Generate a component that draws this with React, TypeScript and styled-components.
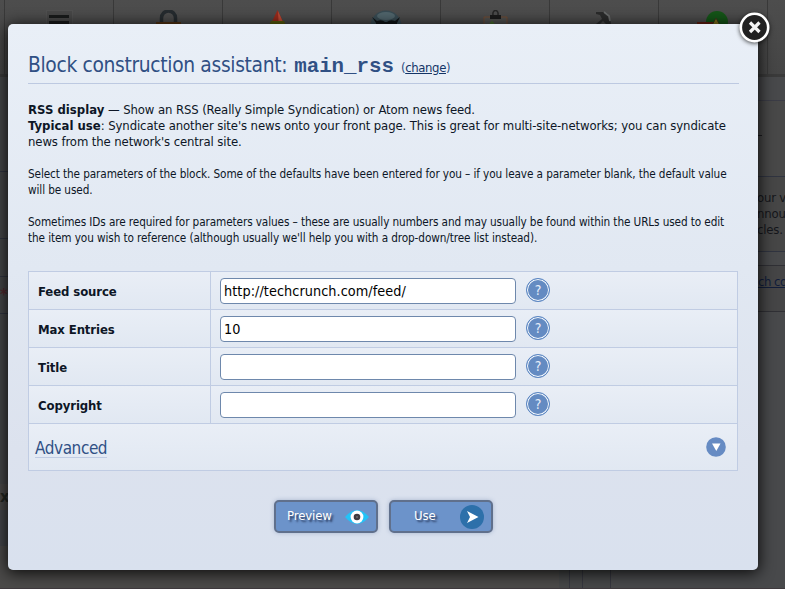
import React from 'react';
import styled, { createGlobalStyle } from 'styled-components';

const GlobalStyle = createGlobalStyle`
  *, *::before, *::after { box-sizing: border-box; }
  html, body { margin: 0; height: 589px; overflow: hidden; background: #484848; }
  body { font: 13px/16px "DejaVu Sans Condensed", "DejaVu Sans", sans-serif; color: #0d1626; }
  h1, h2, p { margin: 0; font-weight: normal; }
`;

/* ---------- dimmed page behind the dialog ---------- */

const Page = styled.div`
  position: relative;
  width: 785px;
  height: 589px;
  overflow: hidden;
  display: flex;
  flex-direction: column;
  background: #48494b;
  border-bottom: 1px solid #3e393d;
`;

const MenuBar = styled.nav`
  display: flex;
  flex: 0 0 77px;
  padding-left: 4px;
  background: linear-gradient(#4d4d4d, #454545);
  border-bottom: 3px solid #3a3a3a;
`;

const MenuCell = styled.div`
  flex: 0 0 109px;
  display: flex;
  justify-content: center;
  padding-top: 10px;
  border-left: 1px solid #393939;
`;

const PageColumns = styled.div`
  flex: 1;
  display: flex;
`;

const LeftColumn = styled.div`
  flex: 0 0 559px;
  display: flex;
  flex-direction: column;
  background: #4b4a49;
`;

const LeftBand = styled.div<{ $h: number; $tone?: string; $line?: boolean; $ink?: string }>`
  flex: 0 0 ${p => p.$h}px;
  background: ${p => p.$tone || '#444648'};
  border-bottom: ${p => (p.$line ? '1px solid #303440' : '0')};
  display: flex;
  align-items: center;
  color: ${p => p.$ink || '#222622'};
  font-size: 16px;
  font-weight: bold;
`;

const Gutter = styled.div<{ $w: number }>`
  flex: 0 0 ${p => p.$w}px;
  background: #464748;
  border-right: 1px solid #36373f;
`;

const RightColumn = styled.div`
  flex: 1;
  display: flex;
  flex-direction: column;
  padding-top: 23px;
  background: #48494b;
`;

const RightHeading = styled.div`
  height: 76px;
  border-top: 1px solid #3b3c46;
  padding: 34px 0 0 139px;
  background: #484848;
`;

const Dash = styled.div`
  width: 12px;
  height: 1px;
  background: #1c1c20;
`;

const Notice = styled.div`
  height: 76px;
  border: 1px solid #303440;
  border-width: 1px 0;
  padding: 13px 0 0 146px;
  margin-bottom: 13px;
  color: #15161b;
  background: #464646;
  letter-spacing: -0.2px;
  white-space: nowrap;
`;

const LinkPanel = styled.div`
  height: 47px;
  border: 1px solid #303035;
  border-width: 1px 0;
  padding: 8px 0 0 147px;
  color: #111d3a;
  background: #454546;
  letter-spacing: -0.5px;
  text-decoration: underline;
  white-space: nowrap;
`;

/* ---------- dialog ---------- */

const Dialog = styled.section`
  position: absolute;
  left: 8px;
  top: 24px;
  width: 750px;
  height: 546px;
  padding: 24px 20px 0;
  border-radius: 5px;
  background: linear-gradient(#e9eff7, #e1e8f2 45%, #dce2ee 78%, #d9e1ee);
  box-shadow: 0 2px 15px 1px rgba(0, 0, 0, 0.85);
  display: flex;
  flex-direction: column;
`;

const CloseButton = styled.button`
  position: absolute;
  left: 739px;
  top: 12px;
  width: 31px;
  height: 31px;
  padding: 0;
  border: 0;
  background: none;
  svg { display: block; overflow: visible; filter: drop-shadow(0 1px 2px rgba(0, 0, 0, 0.7)); }
`;

const Title = styled.h1`
  display: flex;
  align-items: baseline;
  height: 36px;
  flex: none;
  width: 711px;
  border-bottom: 1px solid #bdc9e1;
  font-size: 20.8px;
  line-height: 34px;
  letter-spacing: -0.34px;
  color: #305084;
  white-space: nowrap;
`;

const BlockName = styled.code`
  margin-left: 7px;
  font: bold 20.8px/26px "Courier New", "Liberation Mono", monospace;
  letter-spacing: 0;
`;

const Change = styled.span`
  margin-left: 7px;
  font-size: 13px;
  letter-spacing: -0.38px;
  a { color: #143466; text-decoration: underline; }
`;

const Copy = styled.p<{ $small?: boolean }>`
  flex: none;
  margin-top: ${p => (p.$small ? 16 : 18)}px;
  font-size: ${p => (p.$small ? 11.7 : 13)}px;
  letter-spacing: ${p => (p.$small ? -0.106 : -0.11)}px;
  line-height: 16px;
  white-space: nowrap;
  b { letter-spacing: 0.02px; }
`;

const Table = styled.div`
  flex: none;
  width: 710px;
  margin-top: 25px;
  border: 1px solid #c0cce3;
`;

const Row = styled.div`
  display: grid;
  grid-template-columns: 182px 1fr;
  height: 38px;
  border-bottom: 1px solid #c0cce3;
  background: linear-gradient(#e9eef6, #e1e8f2);
`;

const Label = styled.label`
  display: flex;
  align-items: center;
  padding: 2px 0 0 9px;
  border-right: 1px solid #c0cce3;
  font-weight: bold;
  letter-spacing: -0.1px;
`;

const Field = styled.div`
  display: flex;
  align-items: flex-start;
  gap: 10px;
  padding: 6px 0 0 9px;
`;

const Input = styled.input`
  width: 296px;
  height: 26px;
  padding: 0 3px 1px;
  border: 1px solid #6e88ac;
  border-radius: 4px;
  background: #fff;
  color: #000;
  outline: none;
  font: 14.3px "DejaVu Sans Condensed", "DejaVu Sans", sans-serif;
  letter-spacing: 0.06px;
`;

const Help = styled.span`
  display: flex;
  align-items: center;
  justify-content: center;
  width: 24px;
  height: 24px;
  border: 1px solid #5c87c3;
  border-radius: 50%;
  background: #648bc2;
  box-shadow: inset 0 0 0 1px #f5f9fd;
  color: #e4edf9;
  font: 14px/20px "DejaVu Sans Condensed", "DejaVu Sans", sans-serif;
`;

const Advanced = styled.div`
  display: flex;
  justify-content: space-between;
  align-items: flex-start;
  height: 46px;
  padding: 13px 11px 0 6px;
  background: linear-gradient(#e9eef6, #e1e8f2);
`;

const AdvancedTitle = styled.h2`
  height: 21px;
  border-bottom: 1px solid #c0cce3;
  font-size: 17px;
  line-height: 22px;
  letter-spacing: -0.42px;
  color: #305084;
`;

const Toggle = styled.svg`
  width: 20px;
  height: 20px;
`;

const Actions = styled.div`
  display: flex;
  justify-content: center;
  gap: 11px;
  margin-top: 29px;
  padding-left: 1px;
`;

const Action = styled.button<{ $left: number }>`
  display: flex;
  align-items: center;
  justify-content: space-between;
  width: 104px;
  height: 33px;
  padding: 0 7px 0 ${p => p.$left}px;
  border: 2px solid #60708c;
  border-radius: 5px;
  background: #6c93ca;
  box-shadow: 0 0 4px rgba(90, 115, 160, 0.4);
  color: #fff;
  font: 13px/16px "DejaVu Sans Condensed", "DejaVu Sans", sans-serif;
  letter-spacing: -0.1px;
  text-shadow: 2px 2px 2px rgba(20, 30, 60, 0.8);
`;

const ActionText = styled.span`
  padding-bottom: 2px;
`;

const menuIcons = [
  <svg key="m" width="27" height="24"><rect x=".5" y=".5" width="26" height="23" fill="#474747" stroke="#505050" /><path d="M3 5h20v3H3zM3 11h20v3H3z" fill="#191b1b" /></svg>,
  <svg key="l" width="27" height="24"><path d="M6.500 14V8a7 7 0 0 1 14 0V14" fill="none" stroke="#252b2f" strokeWidth="3.500" /><path d="M1 12h25v12H1z" fill="#553414" /></svg>,
  <svg key="w" width="27" height="24"><path d="M13.500 0 23 20H4z" fill="#982a1b" /><path d="m14 1 4.500 10h-4z" fill="#bf4b36" /><path d="M7 11h13l4 9H3z" fill="#5a5e0c" /></svg>,
  <svg key="s" width="32" height="24"><circle cx="16" cy="16" r="15.500" fill="#384b53" /><ellipse cx="16" cy="6" rx="9" ry="4" fill="#50656c" /><path d="m2 7 5 4q5-2 8 1h2q3-3 8-1l5-4-3 6v6h-8l-3-5-3 5H6v-6z" fill="#101417" /></svg>,
  <svg key="c" width="27" height="24"><path d="M2 7h23v17H2z" fill="#51514f" stroke="#704b33" /><path d="M8 5h11v4H8z" fill="#1b1b1b" /><path d="M11 5c-1-6 6-6 5 0" fill="none" stroke="#252525" strokeWidth="1.500" /><path d="m8 14 2-2 2 2" stroke="#48742a" strokeWidth="1.500" fill="none" /></svg>,
  <svg key="h" width="27" height="24"><path d="M5 2h7c5 0 7 4 8 12h-5l-3-3-5 5-2-2 6-5-2-4-4-1z" fill="#2a2b2b" /><path d="m13 2 5 4 1 5" fill="none" stroke="#686a6a" strokeWidth="1.800" /></svg>,
  <svg key="a" width="32" height="24"><circle cx="20" cy="12" r="11" fill="#145517" /><path d="M0 12h20v10H0z" fill="#662113" /><path d="m19 8 5 9H14z" fill="#83741b" stroke="#35351d" /></svg>,
];

const rows = [
  { label: 'Feed source', value: 'http://techcrunch.com/feed/' },
  { label: 'Max Entries', value: '10' },
  { label: 'Title', value: '' },
  { label: 'Copyright', value: '' },
];

function Background() {
  return (
    <>
      <MenuBar>
        {menuIcons.map((icon, i) => <MenuCell key={i}>{icon}</MenuCell>)}
        <MenuCell />
      </MenuBar>
      <PageColumns>
        <LeftColumn>
          <LeftBand $h={95} $line />
          <LeftBand $h={67} $line />
          <LeftBand $h={38} $line />
          <LeftBand $h={37} $line $ink="#512a30">*</LeftBand>
          <LeftBand $h={147} />
          <LeftBand $h={23} />
          <LeftBand $h={26} $tone="#4a4949">x</LeftBand>
          <LeftBand $h={36} $tone="#434549" />
        </LeftColumn>
        <Gutter $w={11} />
        <Gutter $w={13} />
        <Gutter $w={28} />
        <RightColumn>
          <RightHeading><Dash /></RightHeading>
          <Notice>our v<br />nnou<br />cles.</Notice>
          <LinkPanel>ch co</LinkPanel>
        </RightColumn>
      </PageColumns>
    </>
  );
}

function EyeIcon() {
  return (
    <svg width="24" height="16" viewBox="0 0 24 16">
      <path d="M0 8Q12-6 24 8 12 22 0 8Z" fill="#22c3f8" />
      <circle cx="12" cy="8" r="6.400" fill="#fff" />
      <circle cx="12" cy="8" r="3.300" fill="#3e3b40" />
      <circle cx="12" cy="8" r=".8" fill="#8a888b" />
    </svg>
  );
}

function SendIcon() {
  return (
    <svg width="24" height="24" viewBox="0 0 24 24">
      <circle cx="12" cy="12" r="12" fill="#2d70aa" />
      <path d="m7 6 11.500 6L7 18l3-6z" fill="#fff" />
    </svg>
  );
}

export default function App() {
  return (
    <>
      <GlobalStyle />
      <Page>
        <Background />
        <Dialog>
          <Title>
            Block construction assistant:
            <BlockName>main_rss</BlockName>
            <Change>(<a>change</a>)</Change>
          </Title>
          <Copy>
            <b>RSS display</b> — Show an RSS (Really Simple Syndication) or Atom news feed.<br />
            <b>Typical use</b>: Syndicate another site's news onto your front page. This is great for multi-site-networks; you can syndicate<br />
            news from the network's central site.
          </Copy>
          <Copy $small>
            Select the parameters of the block. Some of the defaults have been entered for you – if you leave a parameter blank, the default value<br />
            will be used.
          </Copy>
          <Copy $small>
            Sometimes IDs are required for parameters values – these are usually numbers and may usually be found within the URLs used to edit<br />
            the item you wish to reference (although usually we'll help you with a drop-down/tree list instead).
          </Copy>
          <Table>
            {rows.map(row => (
              <Row key={row.label}>
                <Label>{row.label}</Label>
                <Field>
                  <Input defaultValue={row.value} />
                  <Help>?</Help>
                </Field>
              </Row>
            ))}
            <Advanced>
              <AdvancedTitle>Advanced</AdvancedTitle>
              <Toggle viewBox="0 0 20 20">
                <circle cx="10" cy="10" r="9.800" fill="#668bc3" />
                <path d="M6 6.500h8.500l-4.200 7.500z" fill="#fff" />
              </Toggle>
            </Advanced>
          </Table>
          <Actions>
            <Action $left={11}><ActionText>Preview</ActionText><EyeIcon /></Action>
            <Action $left={23}><ActionText>Use</ActionText><SendIcon /></Action>
          </Actions>
        </Dialog>
        <CloseButton aria-label="Close">
          <svg width="31" height="31" viewBox="0 0 31 31">
            <circle cx="15.500" cy="15.500" r="13.700" fill="#202020" stroke="#fff" strokeWidth="2.600" />
            <path d="m11 10.500 9.500 9.500M20.500 10.500 11 20" stroke="#f4f4f4" strokeWidth="3.200" />
          </svg>
        </CloseButton>
      </Page>
    </>
  );
}
